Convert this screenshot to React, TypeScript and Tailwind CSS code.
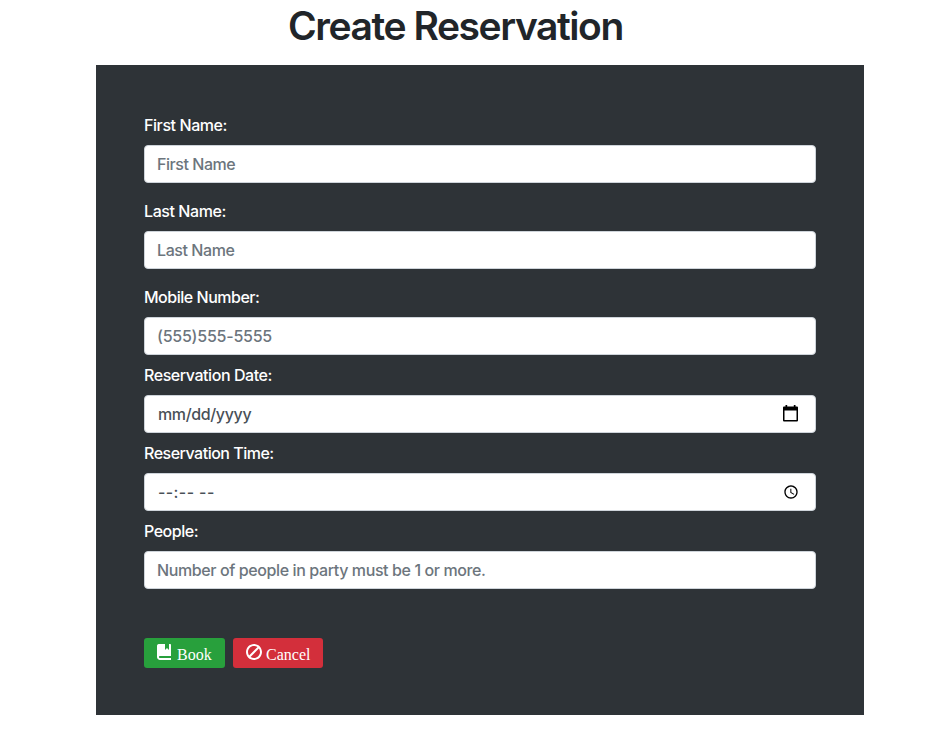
import React from "react";

type FieldProps = {
  label: string;
  labelTracking: string;
  placeholder: string;
  inputStyle: string;
  gap?: string;
  icon?: React.ReactNode;
};

function Field({ label, labelTracking, placeholder, inputStyle, gap = "mb-2", icon }: FieldProps) {
  return (
    <label className={`block ${gap}`}>
      <span className={`mb-2 block h-6 leading-6 text-white ${labelTracking}`}>{label}</span>
      <span className="flex h-[38px] items-center rounded-[4px] border border-[#ced4da] bg-white pl-3 pr-4">
        <input
          className={`h-6 min-w-0 flex-1 bg-transparent leading-6 outline-none ${inputStyle}`}
          placeholder={placeholder}
        />
        {icon}
      </span>
    </label>
  );
}

function CalendarIcon() {
  return (
    <svg className="mb-[2px] mr-px h-[17px] w-[15px]" viewBox="0 0 15 17" fill="black">
      <path d="M2.5 0h1.7v1.5h6.6V0h1.7v1.5H14a1 1 0 0 1 1 1v13a1 1 0 0 1-1 1H1a1 1 0 0 1-1-1v-13a1 1 0 0 1 1-1h1.500zM1.500 5.500V15h12V5.500z" />
    </svg>
  );
}

function ClockIcon() {
  return (
    <svg className="h-4 w-4" viewBox="0 0 24 24" fill="black">
      <path d="M11.99 2C6.47 2 2 6.48 2 12s4.47 10 9.99 10C17.52 22 22 17.52 22 12S17.52 2 11.99 2zM12 20c-4.42 0-8-3.58-8-8s3.58-8 8-8 8 3.58 8 8-3.58 8-8 8zm.5-13H11v6l5.25 3.15.75-1.23-4.5-2.67z" />
    </svg>
  );
}

export default function App() {
  return (
    <main className="h-[741px] bg-white font-['Inter',sans-serif] text-base font-[450] text-[#212529]">
      <h1 className="ml-[288px] h-[65px] whitespace-nowrap pt-[2px] text-[39px] font-[570] leading-[48px] tracking-[-1.43px]">
        Create Reservation
      </h1>
      <form className="ml-24 h-[650px] w-[768px] bg-[#2e3337] px-12 pt-12">
        <Field label="First Name:" labelTracking="tracking-[-0.42px]" placeholder="First Name" inputStyle="tracking-[-0.45px] placeholder:text-[#6c757d]" gap="mb-4" />
        <Field label="Last Name:" labelTracking="tracking-[-0.42px]" placeholder="Last Name" inputStyle="tracking-[-0.42px] placeholder:text-[#6c757d]" gap="mb-4" />
        <Field label="Mobile Number:" labelTracking="tracking-[-0.48px]" placeholder="(555)555-5555" inputStyle="tracking-[-0.24px] placeholder:text-[#6c757d]" />
        <Field label="Reservation Date:" labelTracking="tracking-[-0.44px]" placeholder="mm/dd/yyyy" inputStyle="pl-px tracking-[-0.36px] placeholder:text-[#495057]" icon={<CalendarIcon />} />
        <Field label="Reservation Time:" labelTracking="tracking-[-0.5px]" placeholder="--:-- --" inputStyle="pl-px tracking-[0.4px] placeholder:text-[#495057]" icon={<ClockIcon />} />
        <Field label="People:" labelTracking="tracking-[-0.47px]" placeholder="Number of people in party must be 1 or more." inputStyle="tracking-[-0.39px] placeholder:text-[#6c757d]" gap="mb-[49px]" />
        <div className="flex gap-2 font-['Liberation_Serif',serif] text-base font-normal text-white">
          <button type="button" className="flex h-[30px] w-[81px] rounded-[3px] bg-[#28a03c] pl-[13px] pt-[6px]">
            <svg className="h-4 w-4 shrink-0" viewBox="0 0 8 8" fill="white">
              <path d="M1 0c-.07 0-.13.01-.19.03-.39.08-.7.39-.78.78-.03.06-.03.12-.03.19v5.5c0 .83.67 1.5 1.5 1.5h5.5v-1h-5.5c-.28 0-.5-.22-.5-.5s.22-.5.5-.5h5.5v-5.500c0-.28-.22-.5-.5-.5h-.5v3l-1-1-1 1v-3h-3z" />
            </svg>
            <span className="ml-1 mt-[2px] leading-[18px]">Book</span>
          </button>
          <button type="button" className="flex h-[30px] w-[90px] rounded-[3px] bg-[#d32f3b] pl-[13px] pt-[6px]">
            <svg className="h-4 w-4 shrink-0" viewBox="0 0 8 8" fill="white">
              <path d="M4 0c-2.2 0-4 1.8-4 4s1.8 4 4 4 4-1.8 4-4-1.8-4-4-4zm0 1c.66 0 1.26.21 1.75.56l-4.19 4.19c-.35-.49-.56-1.09-.56-1.75 0-1.66 1.34-3 3-3zm2.44 1.25c.35.49.56 1.09.56 1.75 0 1.66-1.34 3-3 3-.66 0-1.26-.21-1.75-.56l4.19-4.19z" />
            </svg>
            <span className="ml-1 mt-[2px] leading-[18px]">Cancel</span>
          </button>
        </div>
      </form>
    </main>
  );
}
